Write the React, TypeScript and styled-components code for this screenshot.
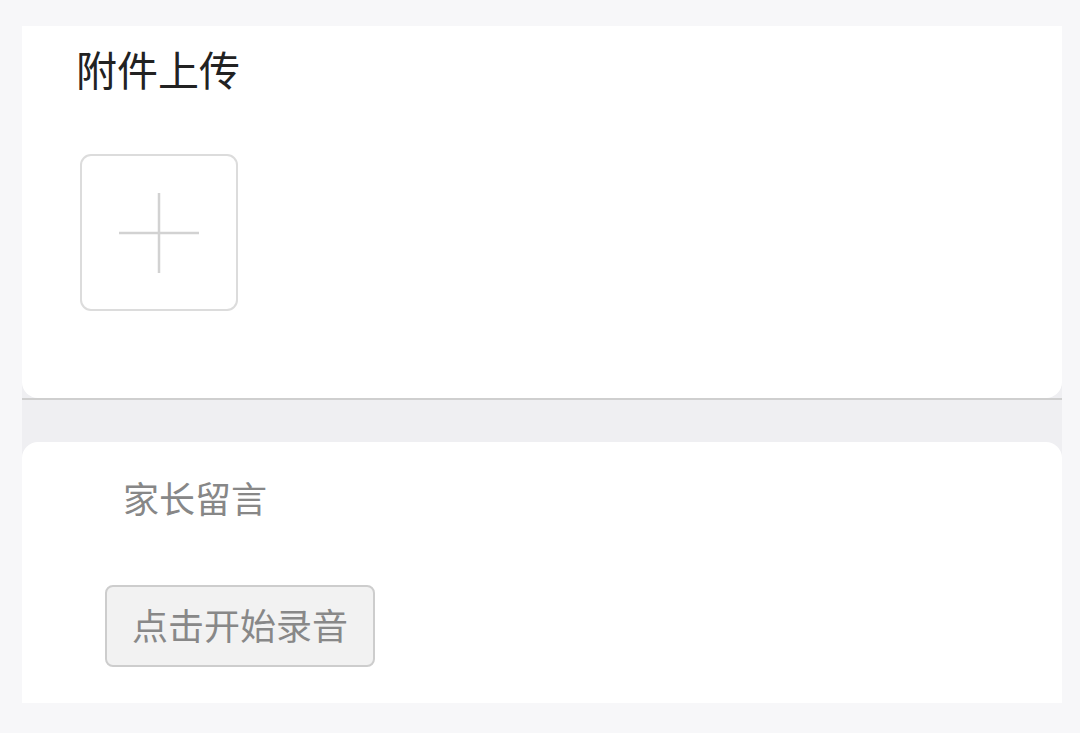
import styled, { createGlobalStyle } from 'styled-components';

const GlobalStyle = createGlobalStyle`
  html, body {
    margin: 0;
    padding: 0;
    background: #f7f7f9;
    font-family: "Noto Sans CJK SC", "Noto Sans", sans-serif;
  }
`;

const Page = styled.div`
  width: 1080px;
  height: 733px;
  box-sizing: border-box;
  padding: 26px 18px 30px 22px;
`;

const Sheet = styled.div`
  display: flex;
  flex-direction: column;
  height: 100%;
  background: #efeff2;
`;

const Section = styled.section<{ $top?: boolean }>`
  background: #fff;
  border-radius: ${(p) => (p.$top ? '0 0 16px 16px' : '16px 16px 0 0')};
`;

const UploadSection = styled(Section)`
  height: 372px;
  padding: 18px 0 0 54px;
  box-sizing: border-box;
`;

const Title = styled.h2`
  margin: 0;
  font-size: 41px;
  font-weight: 400;
  line-height: 48px;
  color: #222;
`;

const UploadBox = styled.button`
  margin: 62px 0 0 4px;
  width: 158px;
  height: 157px;
  box-sizing: border-box;
  border: 2px solid #dcdcdc;
  border-radius: 11px;
  background: #fff;
  display: flex;
  align-items: center;
  justify-content: center;
  padding: 0;
`;

const Divider = styled.div`
  height: 2px;
  background: #cfcfcf;
`;

const Gap = styled.div`
  height: 42px;
`;

const MessageSection = styled(Section)`
  flex: 1;
  padding: 33px 0 0 83px;
  box-sizing: border-box;
`;

const Label = styled.div`
  font-size: 36px;
  line-height: 44px;
  color: #878787;
  margin-left: 18px;
`;

const RecordButton = styled.button`
  margin-top: 66px;
  width: 270px;
  height: 82px;
  box-sizing: border-box;
  border: 2px solid #cdcdcd;
  border-radius: 8px;
  background: #f2f2f2;
  font-family: inherit;
  font-size: 36px;
  color: #888;
  padding: 0 0 5px;
  display: flex;
  align-items: center;
  justify-content: center;
`;

const PlusIcon = () => (
  <svg width="80" height="80" viewBox="0 0 80 80">
    <path d="M0 40H80M40 0V80" stroke="#d2d2d2" strokeWidth="2.5" fill="none" />
  </svg>
);

export default function App() {
  return (
    <>
      <GlobalStyle />
      <Page>
        <Sheet>
          <UploadSection $top>
            <Title>附件上传</Title>
            <UploadBox aria-label="上传附件">
              <PlusIcon />
            </UploadBox>
          </UploadSection>
          <Divider />
          <Gap />
          <MessageSection>
            <Label>家长留言</Label>
            <RecordButton>点击开始录音</RecordButton>
          </MessageSection>
        </Sheet>
      </Page>
    </>
  );
}
